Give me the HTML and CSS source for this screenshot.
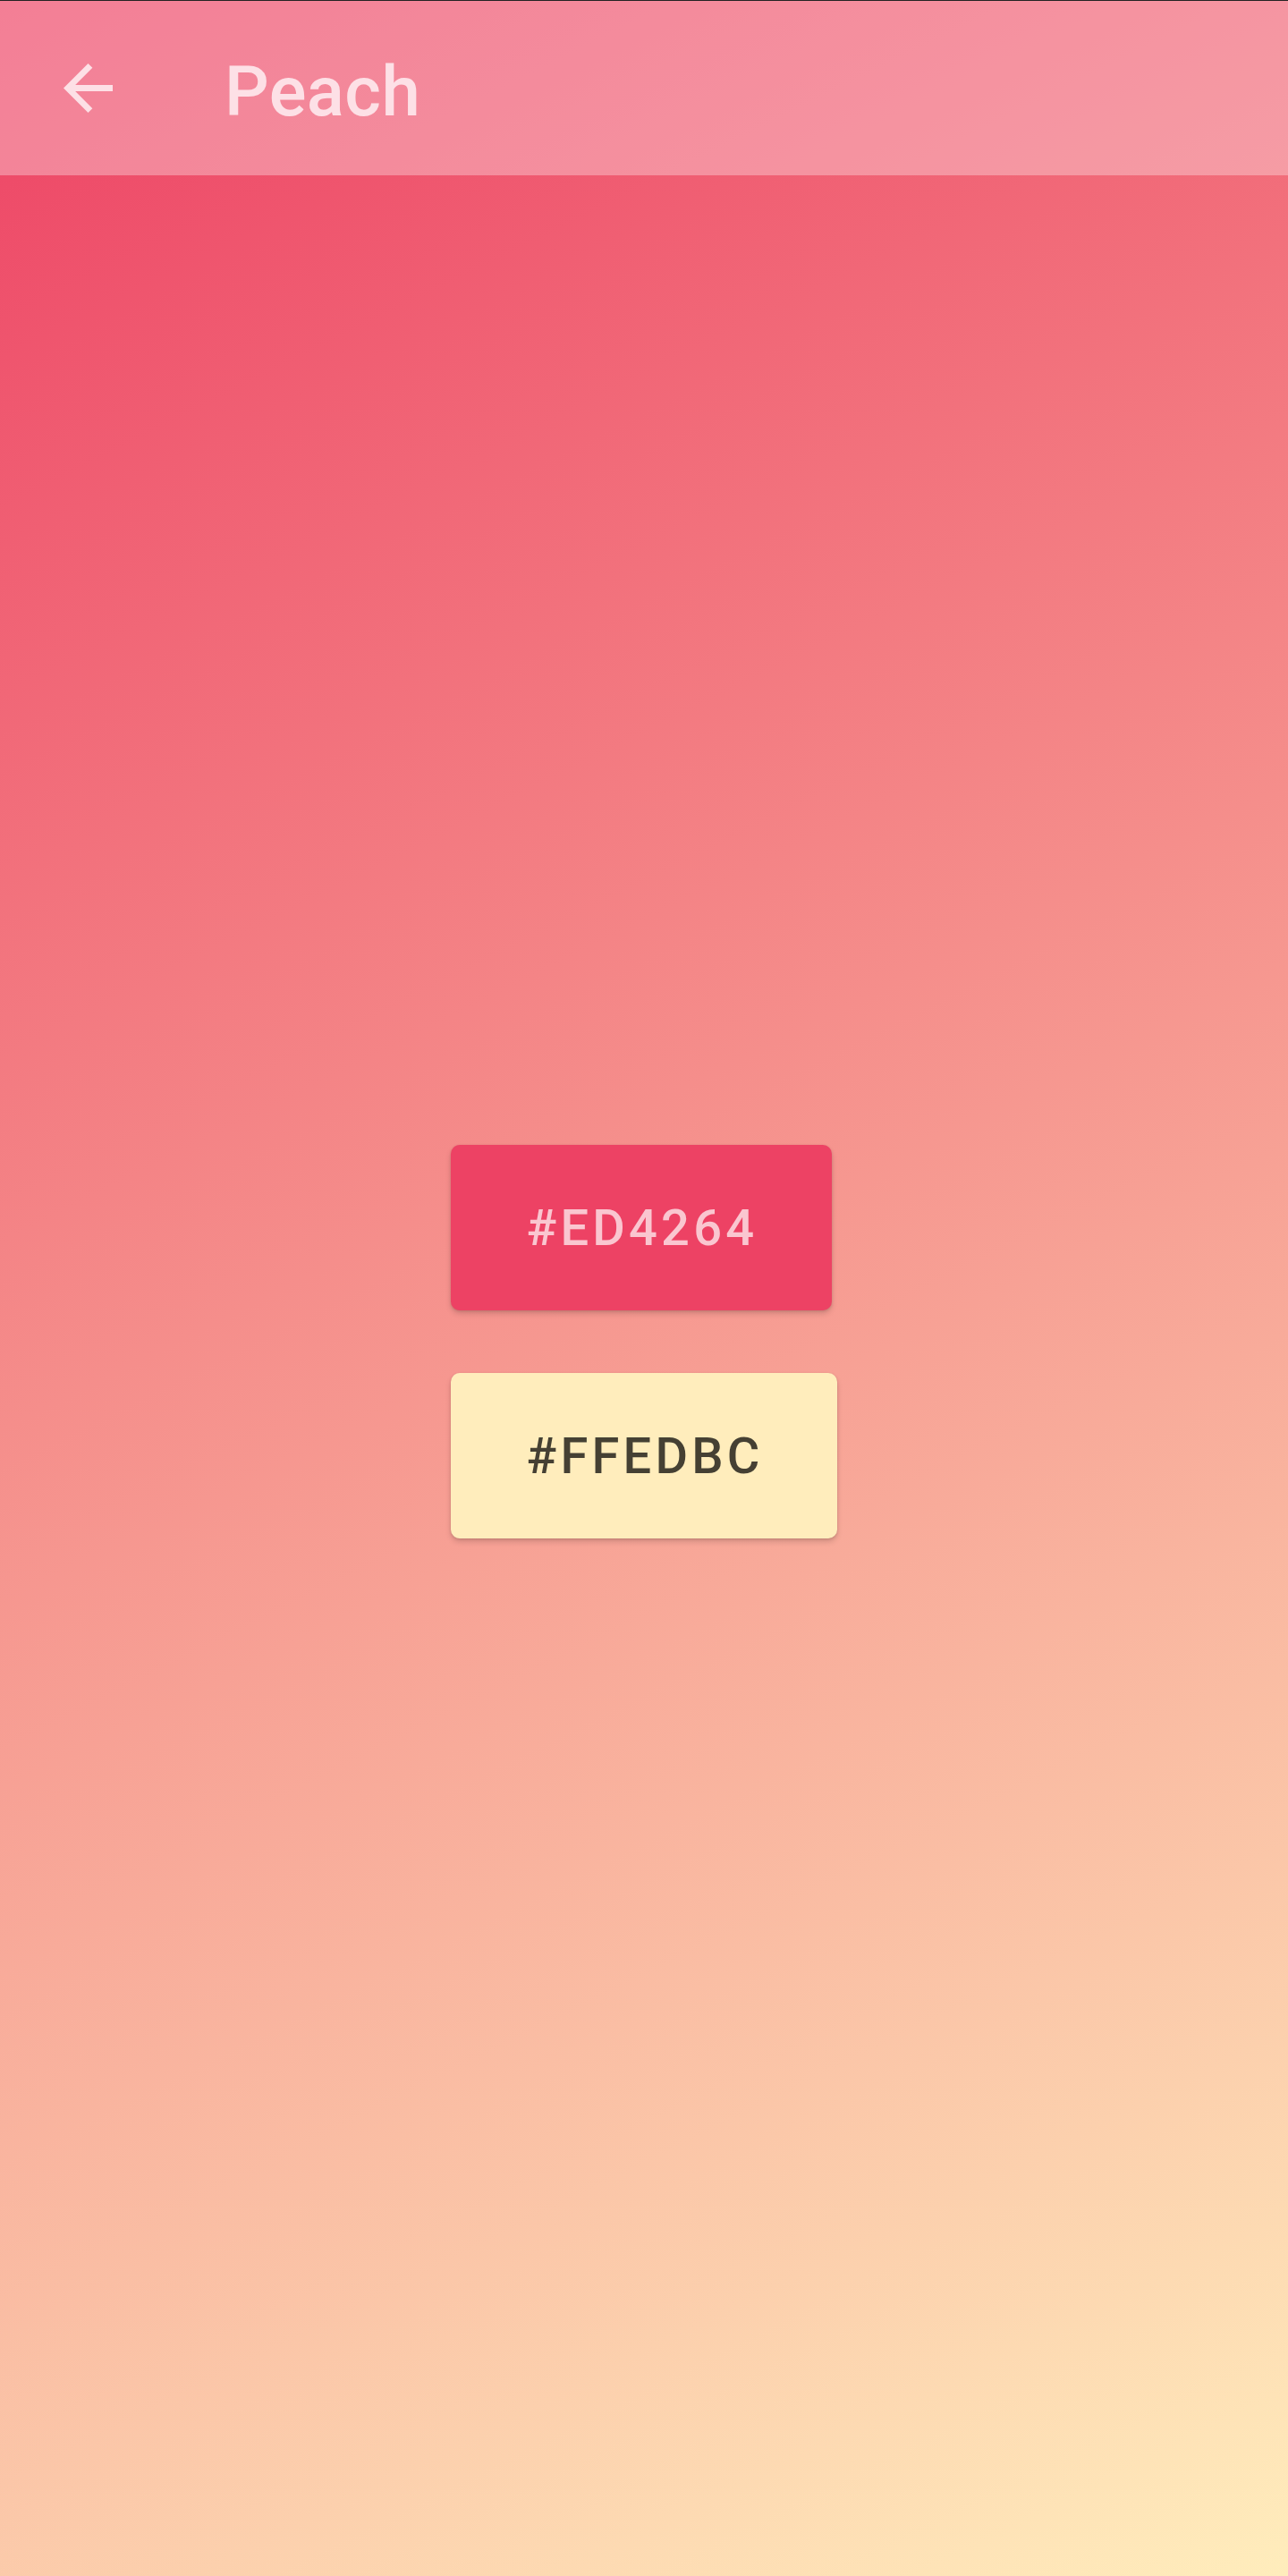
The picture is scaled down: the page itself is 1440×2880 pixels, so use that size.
FILE: index.html
```html
<!DOCTYPE html>
<html lang="en">
<head>
<meta charset="utf-8">
<title>Peach</title>
<link rel="stylesheet" href="styles.css">
</head>
<body>
<div class="screen">
  <header class="appbar">
    <svg class="back" viewBox="4 4 16 16" aria-label="Back">
      <path d="M20 11H7.83l5.59-5.59L12 4l-8 8 8 8 1.41-1.41L7.83 13H20v-2z"/>
    </svg>
    <h1 class="title">Peach</h1>
  </header>
  <main class="content">
    <div class="swatches">
      <button class="swatch swatch-start">#ED4264</button>
      <button class="swatch swatch-end">#FFEDBC</button>
    </div>
  </main>
</div>
</body>
</html>
```
FILE: styles.css
```css
html, body {
  margin: 0;
  padding: 0;
}
body {
  width: 1440px;
  height: 2880px;
  font-family: Roboto, "Noto Sans", "Liberation Sans", sans-serif;
  overflow: hidden;
}
.screen {
  width: 1440px;
  height: 2880px;
  background: linear-gradient(153.435deg, #ED4264 0%, #FFEDBC 100%);
  display: flex;
  flex-direction: column;
}
.appbar {
  box-sizing: border-box;
  height: 196px;
  border-top: 1px solid #222;
  background: rgba(255, 255, 255, 0.32);
  display: flex;
  align-items: center;
  padding-left: 71px;
  gap: 125px;
}
.back {
  width: 55px;
  height: 55px;
  fill: #FDE0E6;
  flex: none;
}
.title {
  margin: 8px 0 0 0;
  font-size: 78px;
  font-weight: 500;
  color: #FDE0E6;
  letter-spacing: 0.005em;
}
.content {
  flex: 1;
  display: flex;
  justify-content: center;
  align-items: flex-start;
  padding-top: 1084px;
}
.swatches {
  display: flex;
  flex-direction: column;
  align-items: flex-start;
  gap: 70px;
}
.swatch {
  box-sizing: border-box;
  height: 185px;
  padding: 0 83px 0 85px;
  border: none;
  border-radius: 10px;
  font-family: Roboto, "Noto Sans", "Liberation Sans", sans-serif;
  font-size: 56px;
  font-weight: 500;
  letter-spacing: 0.075em;
  box-shadow: 0 4px 6px rgba(0, 0, 0, 0.14), 0 1px 3px rgba(0, 0, 0, 0.12);
  cursor: pointer;
}
.swatch-start {
  background: #ED4264;
  color: #FAC6D0;
}
.swatch-end {
  background: #FFEDBC;
  color: rgba(0, 0, 0, 0.73);
}
```
